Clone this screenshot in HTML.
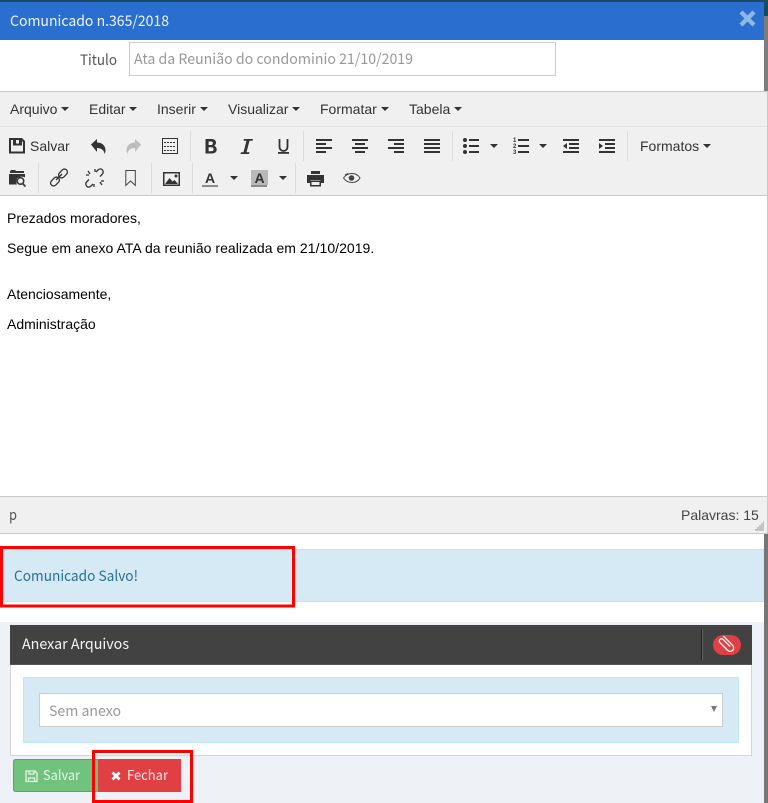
<!DOCTYPE html>
<html lang="pt"><head><meta charset="utf-8"><title>Comunicado</title>
<style>html,body{margin:0;padding:0;width:768px;height:803px;overflow:hidden;background:#fff}svg{display:block;position:absolute;left:0;top:0}
.o{font-family:"Noto Sans CJK JP",sans-serif}
.t{position:absolute;font:14px/16px "Liberation Sans",sans-serif;color:#333;white-space:nowrap}
.c{color:#000}</style></head>
<body>
<svg xmlns="http://www.w3.org/2000/svg" width="768" height="803" viewBox="0 0 768 803">
<rect width="768" height="803" fill="#fff"/>
<!-- outer -->
<rect y="0" width="768" height="2" fill="#1b4a63"/>
<rect x="764" y="2" width="4" height="14" fill="#1b4a63"/>
<rect x="764" y="16" width="4" height="75" fill="#7d7d7d"/>
<rect x="764" y="533" width="4" height="270" fill="#767676"/>
<rect y="622" width="764" height="181" fill="#eef1f6"/>
<!-- header -->
<rect y="2" width="764" height="38" fill="#2a6fd0"/>
<text class="o" x="10" y="26" font-size="14.500" fill="#eef4fc" textLength="159" lengthAdjust="spacingAndGlyphs">Comunicado n.365/2018</text>
<path d="M741 12l13 13m0-13l-13 13" stroke="#8fb8e8" stroke-width="4.400" fill="none"/>
<!-- title -->
<text class="o" x="80" y="65" font-size="14.500" fill="#555" textLength="37" lengthAdjust="spacingAndGlyphs">Titulo</text>
<rect x="129.500" y="42.500" width="426" height="33" fill="#fff" stroke="#ccc"/>
<text class="o" x="134" y="64" font-size="14.500" fill="#999" textLength="279" lengthAdjust="spacingAndGlyphs">Ata da Reunião do condominio 21/10/2019</text>
<!-- editor -->
<rect y="91" width="768" height="443" fill="#c9c9c9"/>
<rect y="92" width="767" height="103" fill="#f0f0f0"/>
<rect y="126" width="767" height="1" fill="#e2e2e2"/>
<rect y="196" width="767" height="300" fill="#fff"/>
<rect y="497" width="767" height="36" fill="#f0f0f0"/>
<path fill="#333" d="M61 107h8l-4 4zM129 107h8l-4 4zM200 107h8l-4 4zM292 107h8l-4 4zM381 107h8l-4 4zM454 107h8l-4 4zM703 144h8l-4 4zM490 144h8l-4 4zM539 144h8l-4 4zM230 176h8l-4 4zM279 176h8l-4 4z"/>
<!-- separators -->
<path stroke="#dcdcdc" d="M190.500 131v30M303.500 131v30M452.500 131v30M627.500 131v30M38.500 163v30M151.500 163v30M192.500 163v30M295.500 163v30"/>
<!-- save -->
<path fill="#333" fill-rule="evenodd" d="M9 138h13l3 3v12.500H9zM11 140v11.500h12v-9.500l-1-1v4.500H13v-5.500zM16 140v3.500h3V140z"/>
<!-- undo / redo -->
<path fill="#333" d="M91 144.500l6-5.500v3.500c5 0 8.500 3 8.500 8 0 1.500-.5 3-1 3.500 0-3.500-3-6-7.500-6V152z"/>
<path fill="#bdbdbd" d="M141 144.500l-6-5.500v3.500c-5 0-8.500 3-8.500 8 0 1.500.5 3 1 3.500 0-3.500 3-6 7.500-6V152z"/>
<!-- template -->
<path fill="#333" fill-rule="evenodd" d="M162 138h16v16h-16zM163 139v14h14v-14z"/>
<path stroke="#333" stroke-dasharray="2 1" fill="none" d="M164 142.500h12M164 146.500h12M164 150.500h12"/>
<!-- B I U -->
<path fill="#333" fill-rule="evenodd" d="M205.500 139h6c3 0 4.500 1.500 4.500 3.800 0 1.500-.8 2.600-2 3.100 1.600.4 2.700 1.700 2.700 3.500 0 2.700-2 4.100-5 4.100h-6.200zM208.600 141.500v3.500h2.300c1.300 0 2-.6 2-1.800s-.7-1.700-2-1.700zM208.600 147.300v4h2.700c1.500 0 2.300-.7 2.300-2s-.8-2-2.300-2z"/>
<path fill="#333" d="M244 139h9l-.5 1.800h-3l-3 11.400h3l-.5 1.800h-8.500l.5-1.800h2.500l3-11.400h-3z"/>
<path fill="none" stroke="#333" stroke-width="1.800" d="M279.500 139v7.500c0 6 8 6 8 0V139"/>
<rect x="278" y="152" width="11" height="1.800" fill="#333"/>
<!-- aligns -->
<path stroke="#333" stroke-width="2" fill="none" d="M316 140h16M316 144h10M316 148h16M316 152h10M352 140h16M355 144h10M352 148h16M355 152h10M388 140h16M394 144h10M388 148h16M394 152h10M424 140h16M424 144h16M424 148h16M424 152h16"/>
<!-- lists -->
<g fill="#333"><circle cx="465" cy="140" r="2"/><circle cx="465" cy="146" r="2"/><circle cx="465" cy="152" r="2"/></g>
<path stroke="#333" stroke-width="2" fill="none" d="M469 140h10M469 146h10M469 152h10M518 140h11M518 146h11M518 152h11"/>
<g font-family="Liberation Sans" font-size="6" fill="#333" font-weight="bold"><text x="513" y="142">1</text><text x="513" y="148">2</text><text x="513" y="154">3</text></g>
<!-- outdent / indent -->
<path stroke="#333" stroke-width="2" fill="none" d="M563 140h16M569 144h10M569 148h10M563 152h16M599 140h16M605 144h10M605 148h10M599 152h16"/>
<path fill="#333" d="M567 143v6l-4-3zM599 143v6l4-3z"/>
<!-- browse -->
<path fill="#333" d="M10 171.500l1-1.500h4l1 1h8v2h-14z"/>
<path fill="#333" fill-rule="evenodd" d="M9 174h16v3.500a5.500 5.500 0 0 0-8 7H9zM20.500 177a4 4 0 1 0 0 8 4 4 0 0 0 0-8zm0 1.500a2.500 2.500 0 1 1 0 5 2.500 2.500 0 0 1 0-5z"/>
<path stroke="#333" stroke-width="1.600" d="M23 184l2.500 2.500"/>
<!-- link -->
<g fill="none" stroke="#333" stroke-width="1.300"><rect x="58" y="170.500" width="10" height="6" rx="3" transform="rotate(-45 63 173.500)"/><rect x="50" y="178.500" width="10" height="6" rx="3" transform="rotate(-45 55 181.500)"/><path d="M56 180l6-6"/>
<!-- unlink -->
<path d="M96 172l2-2c1.500-1.500 3.500-1.500 4.500 0s1 3-.5 4.500l-2 2M93 184l-2 2c-1.500 1.500-3.500 1.500-4.500 0s-1-3 .5-4.500l2-2"/><path d="M88 171l2 3M86 175h3M102 185l-2-3M104 181h-3M95 169v3M94 187v-3"/>
</g>
<!-- bookmark -->
<path fill="none" stroke="#444" stroke-width="1" d="M125.800 170.500h9.500v15l-4.750-4.500-4.750 4.500z"/>
<!-- image -->
<path fill="#333" fill-rule="evenodd" d="M163 172h17v14h-17zM164.500 173.500v11h14v-11z"/>
<path fill="#333" d="M165 184l4.500-6 3 3.500 2-1.500 3.500 4z"/><circle cx="176" cy="176" r="1.500" fill="#333"/>
<!-- text color -->
<text font-family="Liberation Sans" x="205" y="183" font-size="14" font-weight="bold" fill="#333">A</text>
<rect x="202" y="185" width="16" height="2" fill="#8c8c8c"/>
<rect x="251" y="170" width="17" height="15" fill="#b9b9b9"/>
<text font-family="Liberation Sans" x="254.500" y="183" font-size="14" font-weight="bold" fill="#333">A</text>
<rect x="251" y="185" width="16" height="2" fill="#8c8c8c"/>
<!-- print -->
<path fill="#333" fill-rule="evenodd" d="M311 171h9v3h-9zM307 175h17v8h-3.500v-3h-10v3H307z"/>
<path fill="#333" fill-rule="evenodd" d="M310 180.500h11v6h-11zM311.500 182v3h8v-3z"/>
<!-- eye -->
<path fill="none" stroke="#444" stroke-width="1" d="M343.500 178c4-6 13-6 16.500 0-3.500 6-12.500 6-16.500 0z"/>
<circle cx="351.500" cy="178" r="2.800" fill="#444"/><path stroke="#444" fill="none" d="M345 175l3-1.500"/>
<!-- status -->
<text class="o" x="9" y="520" font-size="15" fill="#555" textLength="8" lengthAdjust="spacingAndGlyphs">p</text>
<path stroke="#999" d="M763 522h1M761 524h3M759 526h5M757 528h7M755 530h9"/>
<!-- alert -->
<rect x=".5" y="549.500" width="763" height="52" fill="#d5eaf5" stroke="#bce8f1"/>
<text class="o" x="14" y="581" font-size="14.500" fill="#2a7096" textLength="124" lengthAdjust="spacingAndGlyphs">Comunicado Salvo!</text>
<rect x="1.500" y="547.500" width="292" height="58.500" fill="none" stroke="#f00" stroke-width="3"/>
<!-- panel -->
<rect x="10.500" y="625.500" width="741" height="130" fill="#fff" stroke="#d5d5d5"/>
<rect x="10" y="625" width="742" height="40" fill="#424242"/>
<rect x="10" y="664" width="742" height="1" fill="#555"/>
<text class="o" x="22" y="649" font-size="14.500" fill="#f5f5f5" textLength="107" lengthAdjust="spacingAndGlyphs">Anexar Arquivos</text>
<rect x="701" y="629" width="1" height="31" fill="#222"/>
<rect x="702" y="629" width="1" height="31" fill="#666"/>
<rect x="713" y="635" width="28" height="20" rx="10" fill="#e04044"/>
<g transform="rotate(45 727 644)"><path fill="none" stroke="#fff" stroke-width="1.300" d="M719 641h13a3.500 3.500 0 0 1 0 7h-11a2.200 2.200 0 0 1 0-4.400h10"/></g>
<rect x="23.500" y="677.500" width="715" height="65" fill="#d5eaf5" stroke="#bce8f1"/>
<rect x="39.500" y="693.500" width="683" height="33" fill="#fff" stroke="#ccc"/>
<text class="o" x="49" y="716" font-size="14.500" fill="#999" textLength="72" lengthAdjust="spacingAndGlyphs">Sem anexo</text>
<path fill="#777" d="M711 706h6l-3 6z"/>
<!-- buttons -->
<rect x="13.500" y="759.500" width="85" height="32" rx="2" fill="#71c27c" stroke="#4f93e0"/>
<path fill="none" stroke="#e6f5e8" stroke-width="1.300" d="M26 771h9l2 2v8.500H26zM29 771v3h5v-3M28.500 781.500v-3.500h6v3.500"/>
<text class="o" x="43" y="780" font-size="13.500" fill="#e6f5e8" textLength="37" lengthAdjust="spacingAndGlyphs">Salvar</text>
<rect x="98" y="759" width="83" height="33" fill="#e04044"/>
<path stroke="#fff" stroke-width="2.800" d="M112.500 772.500l7 7m0-7l-7 7"/>
<text class="o" x="127" y="780" font-size="13.500" fill="#fbeaea" textLength="41" lengthAdjust="spacingAndGlyphs">Fechar</text>
<rect x="93.500" y="751.500" width="98" height="50" fill="none" stroke="#f00" stroke-width="3"/>
</svg>
<div class="t" style="left:10px;top:101px">Arquivo</div>
<div class="t" style="left:89px;top:101px">Editar</div>
<div class="t" style="left:157px;top:101px">Inserir</div>
<div class="t" style="left:228px;top:101px">Visualizar</div>
<div class="t" style="left:320px;top:101px">Formatar</div>
<div class="t" style="left:409px;top:101px">Tabela</div>
<div class="t" style="left:30px;top:138px">Salvar</div>
<div class="t" style="left:640px;top:138px">Formatos</div>
<div class="t c" style="left:7px;top:210px">Prezados moradores,</div>
<div class="t c" style="left:7px;top:240px;letter-spacing:.037px">Segue em anexo ATA da reunião realizada em 21/10/2019.</div>
<div class="t c" style="left:7px;top:286px">Atenciosamente,</div>
<div class="t c" style="left:7px;top:316px">Administração</div>
<div class="t" style="left:681px;top:507px;color:#444">Palavras: 15</div>
</body></html>
